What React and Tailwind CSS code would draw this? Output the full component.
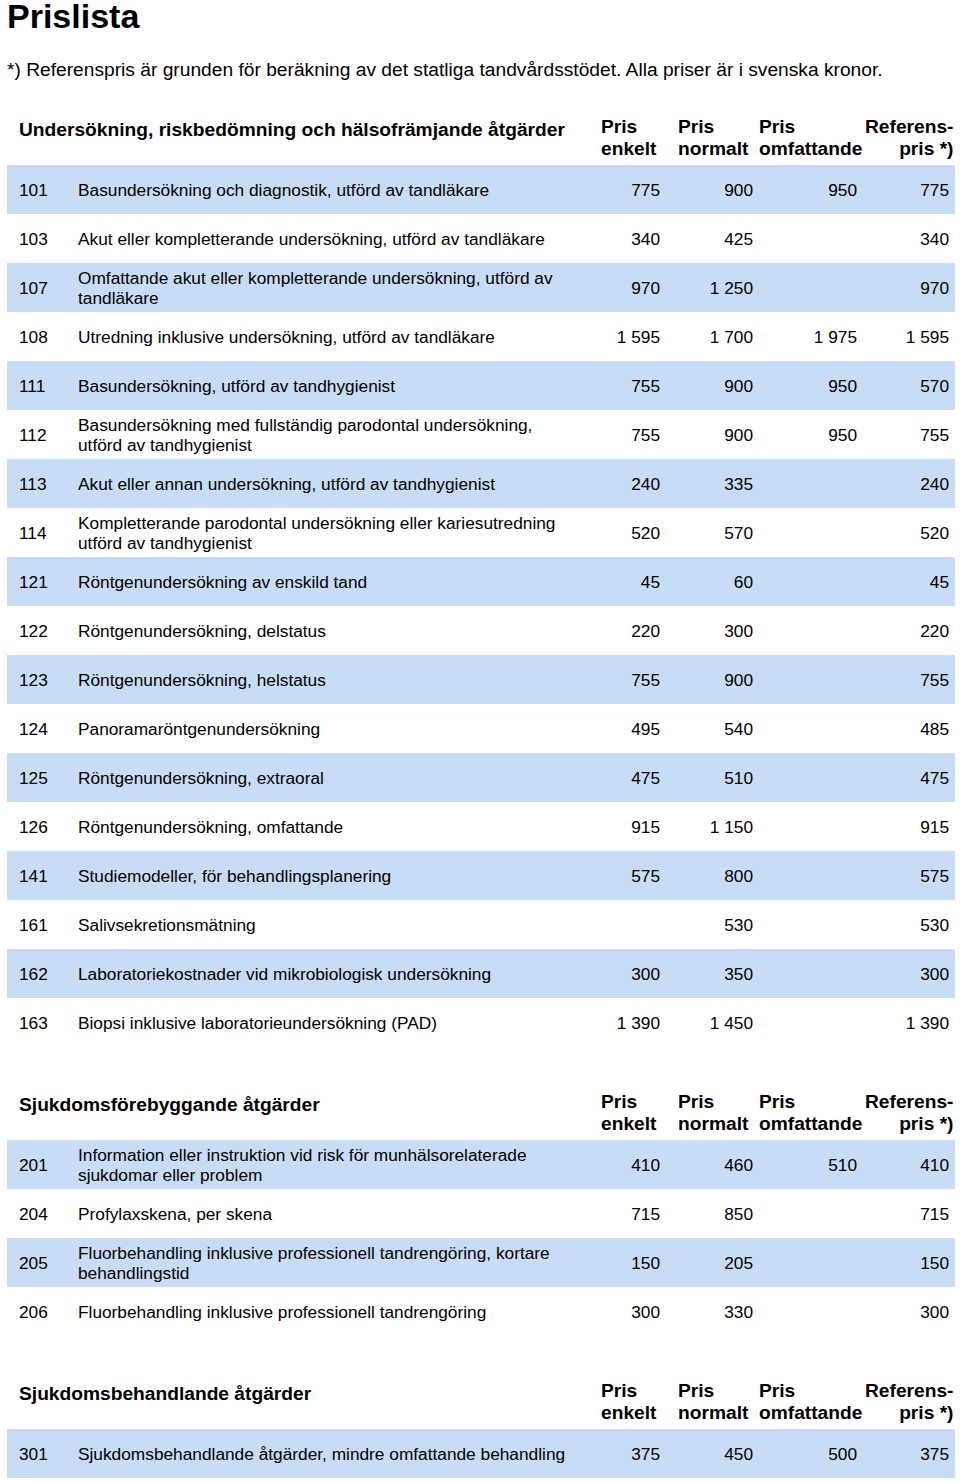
const sections = [
  {
    title: "Undersökning, riskbedömning och hälsofrämjande åtgärder",
    rows: [
      ["101", ["Basundersökning och diagnostik, utförd av tandläkare"], "775", "900", "950", "775"],
      ["103", ["Akut eller kompletterande undersökning, utförd av tandläkare"], "340", "425", "", "340"],
      ["107", ["Omfattande akut eller kompletterande undersökning, utförd av", "tandläkare"], "970", "1 250", "", "970"],
      ["108", ["Utredning inklusive undersökning, utförd av tandläkare"], "1 595", "1 700", "1 975", "1 595"],
      ["111", ["Basundersökning, utförd av tandhygienist"], "755", "900", "950", "570"],
      ["112", ["Basundersökning med fullständig parodontal undersökning,", "utförd av tandhygienist"], "755", "900", "950", "755"],
      ["113", ["Akut eller annan undersökning, utförd av tandhygienist"], "240", "335", "", "240"],
      ["114", ["Kompletterande parodontal undersökning eller kariesutredning", "utförd av tandhygienist"], "520", "570", "", "520"],
      ["121", ["Röntgenundersökning av enskild tand"], "45", "60", "", "45"],
      ["122", ["Röntgenundersökning, delstatus"], "220", "300", "", "220"],
      ["123", ["Röntgenundersökning, helstatus"], "755", "900", "", "755"],
      ["124", ["Panoramaröntgenundersökning"], "495", "540", "", "485"],
      ["125", ["Röntgenundersökning, extraoral"], "475", "510", "", "475"],
      ["126", ["Röntgenundersökning, omfattande"], "915", "1 150", "", "915"],
      ["141", ["Studiemodeller, för behandlingsplanering"], "575", "800", "", "575"],
      ["161", ["Salivsekretionsmätning"], "", "530", "", "530"],
      ["162", ["Laboratoriekostnader vid mikrobiologisk undersökning"], "300", "350", "", "300"],
      ["163", ["Biopsi inklusive laboratorieundersökning (PAD)"], "1 390", "1 450", "", "1 390"],
    ],
  },
  {
    title: "Sjukdomsförebyggande åtgärder",
    rows: [
      ["201", ["Information eller instruktion vid risk för munhälsorelaterade", "sjukdomar eller problem"], "410", "460", "510", "410"],
      ["204", ["Profylaxskena, per skena"], "715", "850", "", "715"],
      ["205", ["Fluorbehandling inklusive professionell tandrengöring, kortare", "behandlingstid"], "150", "205", "", "150"],
      ["206", ["Fluorbehandling inklusive professionell tandrengöring"], "300", "330", "", "300"],
    ],
  },
  {
    title: "Sjukdomsbehandlande åtgärder",
    rows: [
      ["301", ["Sjukdomsbehandlande åtgärder, mindre omfattande behandling"], "375", "450", "500", "375"],
    ],
  },
];

const grid = "grid grid-cols-[59px_523px_69px_87px_108px_1fr] pl-[12px] pr-[6px]";

function Section({ section, first }) {
  return (
    <div className={first ? "mt-[35px]" : "mt-[44px]"}>
      <div className={`${grid} h-[49px] text-[19.2px] font-bold leading-[22px]`}>
        <div className="col-span-2 pt-[3px] whitespace-nowrap">{section.title}</div>
        <div className="whitespace-nowrap">Pris<br />enkelt</div>
        <div className="pl-[8px] whitespace-nowrap">Pris<br />normalt</div>
        <div className="pl-[2px] whitespace-nowrap">Pris<br />omfattande</div>
        <div className="text-right pr-[2px] whitespace-nowrap">Referens-<br />pris *)</div>
      </div>
      {section.rows.map((r, i) => (
        <div
          key={r[0]}
          className={`${grid} h-[49px] items-center text-[17.3px] leading-[20px] ${i % 2 === 0 ? "bg-[#c8ddf5]" : ""}`}
        >
          <div>{r[0]}</div>
          <div className="whitespace-nowrap">
            {r[1].map((l, j) => (
              <div key={j}>{l}</div>
            ))}
          </div>
          <div className="text-right pr-[10px]">{r[2]}</div>
          <div className="text-right pr-[4px]">{r[3]}</div>
          <div className="text-right pr-[8px]">{r[4]}</div>
          <div className="text-right">{r[5]}</div>
        </div>
      ))}
    </div>
  );
}

export default function App() {
  return (
    <div
      className="w-[960px] bg-white text-black pb-[5px]"
      style={{ fontFamily: '"Liberation Sans", Arial, sans-serif' }}
    >
      <h1 className="ml-[7px] text-[34px] leading-[32px] font-bold">Prislista</h1>
      <p className="ml-[7px] mt-[27px] text-[19.2px] leading-[22px]">
        *) Referenspris är grunden för beräkning av det statliga tandvårdsstödet. Alla priser är i svenska kronor.
      </p>
      <div className="ml-[7px] w-[948px]">
        {sections.map((s, i) => (
          <Section key={s.title} section={s} first={i === 0} />
        ))}
      </div>
    </div>
  );
}
